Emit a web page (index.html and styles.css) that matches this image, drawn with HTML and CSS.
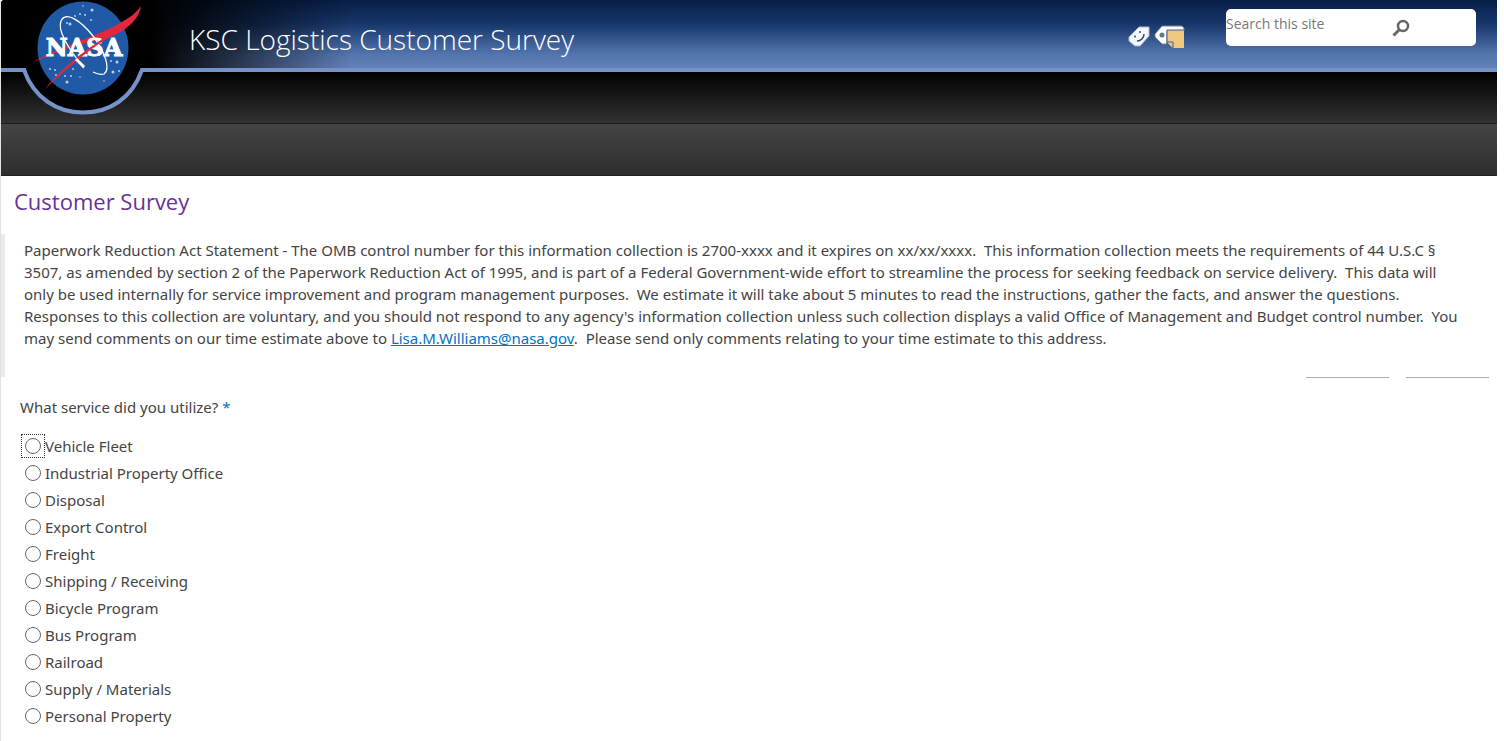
FILE: index.html
```html
<!DOCTYPE html>
<html lang="en">
<head>
    <meta charset="UTF-8">
    <meta name="viewport" content="width=device-width, initial-scale=1.0">
    <title>Customer Survey</title>
    <link rel="stylesheet" href="styles.css">
</head>
<body>
    <div class="page">
        <header class="header">
            <div class="banner">
                <a href="#" class="logo" aria-label="NASA home">
                    <svg width="150" height="116" viewBox="0 0 150 116">
                        <path d="M25 66 H143 C134 96 113 111 84 111 C55 111 34 96 25 66Z" fill="#000"/>
                        <path d="M1 70 H24 C34 98 57 112.500 83 112.500 C110 112.500 132 98 142 70 H150" fill="none" stroke="#7593c8" stroke-width="4"/>
                        <ellipse cx="83" cy="48" rx="45.500" ry="46.500" fill="#205aa7"/>
                        <g fill="#b9cce8">
                            <circle cx="75" cy="16" r="1"/><circle cx="80" cy="14" r="1"/><circle cx="92" cy="10" r="1.500"/>
                            <circle cx="85" cy="15" r="1"/><circle cx="83" cy="6" r="0.800"/><circle cx="91" cy="20" r="1"/>
                            <circle cx="70" cy="24" r="1.500"/><circle cx="67" cy="23" r="1"/><circle cx="50" cy="69" r="1"/>
                            <circle cx="55" cy="70" r="1"/><circle cx="56" cy="75" r="1"/><circle cx="65" cy="76" r="1"/>
                            <circle cx="67" cy="82" r="1.500"/><circle cx="71" cy="76" r="1"/><circle cx="73" cy="69" r="1"/>
                            <circle cx="80" cy="77" r="0.800"/><circle cx="113" cy="72" r="1.500"/><circle cx="117" cy="62" r="1.500"/>
                            <circle cx="111" cy="61" r="1"/><circle cx="119" cy="71" r="1"/><circle cx="104" cy="81" r="0.800"/>
                        </g>
                        <path d="M33 62 C58 47 98 36 120 23 C131 17 136 13 141 6 C139 18 130 29 108 38 C80 43 55 53 33 62Z" fill="#e1283c"/>
                        <path d="M84 68 C71 52 57 31 61 21 C66 10 82 22 93 36 C105 52 111 69 104 74 C101 75 97 74 93 72" fill="none" stroke="#fff" stroke-width="1.300"/>
                        <text class="logo-text" x="84" y="56" text-anchor="middle">NASA</text>
                        <path d="M120 29 C96 41 64 65 45 89 C62 73 84 53 108 38Z" fill="#e1283c"/>
                        <path d="M76 59 L84 67" stroke="#fff" stroke-width="3"/>
                    </svg>
                </a>
                <h1 class="site-title">KSC Logistics Customer Survey</h1>
                <div class="tools">
                    <a href="#" aria-label="I like it">
                        <svg width="24" height="26" viewBox="0 0 24 26">
                            <path d="M2 14 L12 4 H22 V13 L13 23 H8 L2 18Z" fill="#f3f6fb" stroke="#a9b8d0"/>
                            <circle cx="8" cy="13.500" r="1" fill="#304b70"/><circle cx="13" cy="9" r="1" fill="#304b70"/>
                            <path d="M10 18 C14 18 17 15 17 11" fill="none" stroke="#304b70" stroke-width="1.500"/>
                        </svg>
                    </a>
                    <a href="#" aria-label="Tags and notes">
                        <svg width="32" height="26" viewBox="0 0 32 26">
                            <path d="M2 11 L9 3 H29 L31 5 V8 H14 V21 H9 L2 14Z" fill="#fff" stroke="#7c7c7c"/>
                            <circle cx="9" cy="12" r="2.500" fill="#65758f"/>
                            <path d="M14 7 H31 V25 H20 L14 19Z" fill="#efc77e"/>
                            <path d="M14 25 V7 H31 M14 19 H20 V25" fill="none" stroke="#3e5f93"/>
                            <path d="M15 20 H19 V24Z" fill="#efc77e"/>
                        </svg>
                    </a>
                </div>
                <form class="search">
                    <input type="text" class="search-input" placeholder="Search this site" aria-label="Search this site">
                    <button type="button" class="search-button" aria-label="Search">
                        <svg width="18" height="18" viewBox="0 0 18 18">
                            <circle cx="11" cy="7" r="5" fill="none" stroke="#666" stroke-width="2.500"/>
                            <path d="M7 11 L1.500 16.500" stroke="#666" stroke-width="3"/>
                        </svg>
                    </button>
                </form>
            </div>
            <div class="top-nav"></div>
            <div class="sub-nav"></div>
        </header>

        <main>
            <h2 class="survey-title">Customer Survey</h2>
            <div class="statement">
                <p>
                    Paperwork Reduction Act Statement - The OMB control number for this information collection is 2700-xxxx and it expires on xx/xx/xxxx.&nbsp; This information collection meets the requirements of 44 U.S.C §<br>
                    3507, as amended by section 2 of the Paperwork Reduction Act of 1995, and is part of a Federal Government-wide effort to streamline the process for seeking feedback on service delivery.&nbsp; This data will<br>
                    only be used internally for service improvement and program management purposes.&nbsp; We estimate it will take about 5 minutes to read the instructions, gather the facts, and answer the questions.<br>
                    Responses to this collection are voluntary, and you should not respond to any agency's information collection unless such collection displays a valid Office of Management and Budget control number.&nbsp; You<br>
                    may send comments on our time estimate above to <a href="mailto:Lisa.M.Williams@nasa.gov">Lisa.M.Williams@nasa.gov</a>.&nbsp; Please send only comments relating to your time estimate to this address.
                </p>
            </div>
            <div class="rules"><span></span><span></span></div>

            <fieldset class="question">
                <legend>What service did you utilize? <span class="required">*</span></legend>
                <label class="option"><span class="radio focused"><input type="radio" name="service"></span>Vehicle Fleet</label>
                <label class="option"><span class="radio"><input type="radio" name="service"></span>Industrial Property Office</label>
                <label class="option"><span class="radio"><input type="radio" name="service"></span>Disposal</label>
                <label class="option"><span class="radio"><input type="radio" name="service"></span>Export Control</label>
                <label class="option"><span class="radio"><input type="radio" name="service"></span>Freight</label>
                <label class="option"><span class="radio"><input type="radio" name="service"></span>Shipping / Receiving</label>
                <label class="option"><span class="radio"><input type="radio" name="service"></span>Bicycle Program</label>
                <label class="option"><span class="radio"><input type="radio" name="service"></span>Bus Program</label>
                <label class="option"><span class="radio"><input type="radio" name="service"></span>Railroad</label>
                <label class="option"><span class="radio"><input type="radio" name="service"></span>Supply / Materials</label>
                <label class="option"><span class="radio"><input type="radio" name="service"></span>Personal Property</label>
            </fieldset>
        </main>
    </div>
</body>
</html>
```
FILE: styles.css
```css
* {
    margin: 0;
    padding: 0;
    box-sizing: border-box;
}

body {
    background: #fff;
    color: #444;
    font-family: "Noto Sans", "Open Sans", sans-serif;
    font-size: 15px;
    line-height: 22px;
}

.page {
    margin-right: 7px;
    border-left: 1px solid #e3e3e3;
    min-height: 100vh;
}

.header {
    background: #000;
    border-top-left-radius: 4px;
}

.banner {
    position: relative;
    display: flex;
    align-items: center;
    height: 72px;
    padding-right: 21px;
    border-bottom: 4px solid #7593c8;
    background: linear-gradient(to right, #000 150px, transparent 350px), linear-gradient(#071f47, #17366a 35%, #5375ae 80%, #6581b8);
    border-top-left-radius: 4px;
}

/* emblem hangs over the nav bar below */
.logo {
    position: absolute;
    left: -1px;
    top: 0;
}

.logo svg {
    display: block;
}

.logo-text {
    fill: #fff;
    stroke: #fff;
    stroke-width: 1px;
    font-family: "DejaVu Serif", serif;
    font-size: 24px;
    font-weight: bold;
}

.site-title {
    flex: 1;
    padding: 10px 0 0 188px;
    color: #fff;
    font-family: "Open Sans", sans-serif;
    font-size: 28px;
    font-weight: 300;
    line-height: 36px;
}

.tools {
    display: flex;
    gap: 2px;
    padding-top: 4px;
    margin-right: 41px;
}

.tools svg {
    display: block;
}

.search {
    display: flex;
    align-items: flex-start;
    width: 250px;
    height: 37px;
    margin-bottom: 14px;
    background: #fff;
    border-radius: 5px;
}

.search-input {
    width: 164px;
    height: 30px;
    border: none;
    background: none;
    color: #666;
    font: 14px "Open Sans", sans-serif;
}

.search-input::placeholder {
    color: #777;
}

.search-button {
    padding: 10px 2px;
    border: none;
    background: none;
    cursor: pointer;
}

.search-button svg {
    display: block;
}

.top-nav {
    height: 51px;
    background: linear-gradient(#000, #323232);
}

.sub-nav {
    height: 53px;
    background: linear-gradient(#444, #2e2e2e);
    border-top: 1px solid #1c1c1c;
    border-bottom: 1px solid #222;
}

.survey-title {
    padding: 9px 13px 17px;
    color: #663399;
    font-family: "Open Sans", sans-serif;
    font-size: 22px;
    font-weight: 400;
    line-height: 32px;
}

.statement {
    padding: 5px 0 28px 19px;
    border-left: 4px solid #ebebeb;
}

.statement a {
    color: #0072c6;
}

.rules {
    display: flex;
    justify-content: flex-end;
    gap: 17px;
    padding-right: 8px;
}

.rules span {
    width: 83px;
    border-top: 1px solid #ababab;
}

.question {
    padding: 18px 19px 0;
    border: none;
}

.question legend {
    float: left;
    width: 100%;
    margin-bottom: 14px;
}

.required {
    color: #0072c6;
}

.option {
    display: flex;
    align-items: center;
    clear: both;
    width: fit-content;
    height: 27px;
}

.radio {
    display: flex;
    padding: 3px;
    margin: 0 1px 0 2px;
}

.radio input {
    appearance: none;
    width: 16px;
    height: 16px;
    border: 1px solid #666;
    border-radius: 50%;
}

.focused {
    outline: 1px dotted #333;
}
```
